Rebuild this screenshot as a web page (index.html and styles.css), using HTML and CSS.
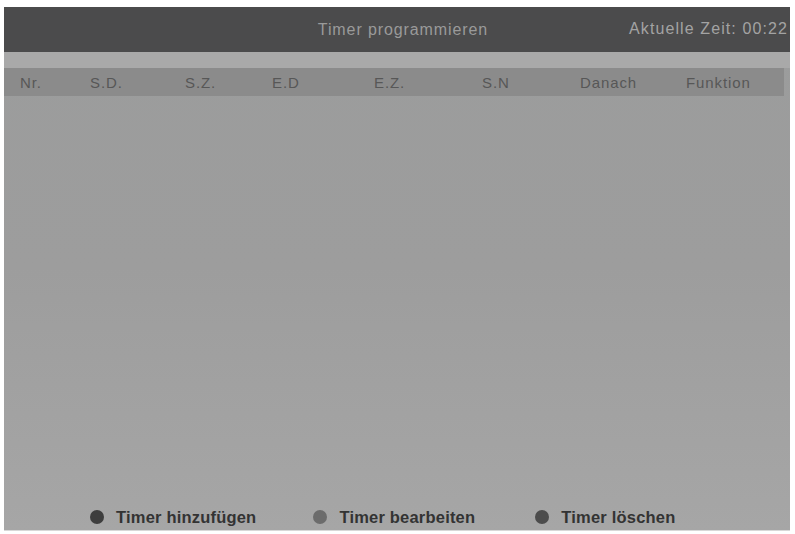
FILE: index.html
```html
<!DOCTYPE html>
<html lang="de">
<head>
<meta charset="utf-8">
<title>Timer programmieren</title>
<link rel="stylesheet" href="styles.css">
</head>
<body>
<div class="screen">
  <div class="topbar">
    <div class="title">Timer programmieren</div>
    <div class="clock">Aktuelle Zeit: 00:22</div>
  </div>
  <div class="strip"></div>
  <div class="cols">
    <span>Nr.</span>
    <span>S.D.</span>
    <span>S.Z.</span>
    <span>E.D</span>
    <span>E.Z.</span>
    <span>S.N</span>
    <span>Danach</span>
    <span>Funktion</span>
  </div>
  <div class="list"></div>
  <div class="footer">
    <div class="action"><span class="dot dot-a"></span>Timer hinzufügen</div>
    <div class="action action-b"><span class="dot dot-b"></span>Timer bearbeiten</div>
    <div class="action action-c"><span class="dot dot-c"></span>Timer löschen</div>
  </div>
</div>
</body>
</html>
```

FILE: styles.css
```css
html, body {
  margin: 0;
  padding: 0;
  background: #ffffff;
  width: 795px;
  height: 534px;
  overflow: hidden;
  font-family: "Liberation Sans", Arial, sans-serif;
}

.screen {
  margin: 7px 5px 0 4px;
  width: 786px;
  height: 523px;
  display: flex;
  flex-direction: column;
  background: linear-gradient(to bottom, #9b9c9c 0%, #9d9d9d 50%, #a6a6a6 100%);
  border-bottom: 1px solid #d8d8d8;
}

.topbar {
  height: 45px;
  background: #4b4b4c;
  position: relative;
  display: flex;
  align-items: center;
  justify-content: center;
  color: #9a9a9a;
  font-size: 16px;
  letter-spacing: 0.9px;
}

.title {
  margin-left: 12px;
}

.clock {
  position: absolute;
  right: 2px;
  top: 13px;
  color: #a3a3a3;
  letter-spacing: 1.1px;
}

.strip {
  height: 16px;
  background: #a9a9a9;
}

.cols {
  height: 28px;
  margin-right: 6px;
  background: #8b8b8b;
  display: grid;
  grid-template-columns: 70px 95px 87px 102px 108px 98px 106px 1fr;
  align-items: center;
  padding-left: 16px;
  font-size: 15px;
  letter-spacing: 0.9px;
  color: #575757;
}

.list {
  flex: 1;
}

.footer {
  height: 26px;
  display: flex;
  align-items: center;
  padding-left: 86px;
  padding-top: 2px;
  font-size: 16.5px;
  font-weight: bold;
  color: #333333;
  letter-spacing: 0.2px;
}

.action {
  display: flex;
  align-items: center;
  gap: 12px;
}

.action-b {
  margin-left: 57px;
}

.action-c {
  margin-left: 60px;
}

.dot {
  width: 14px;
  height: 14px;
  border-radius: 50%;
  display: inline-block;
}

.dot-a { background: #3e3e3e; }
.dot-b { background: #6c6c6c; }
.dot-c { background: #4c4c4c; }
```
